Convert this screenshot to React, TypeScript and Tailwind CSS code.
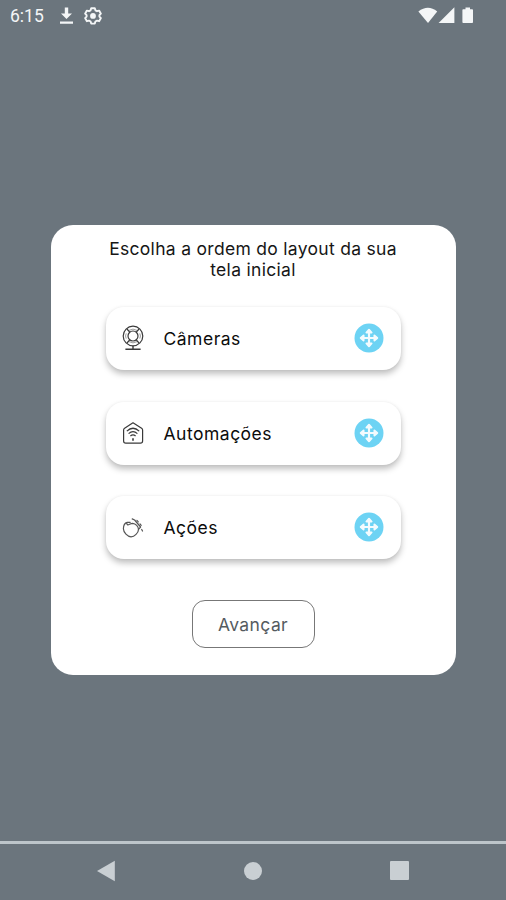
import React from 'react';

const CameraIcon = () => (
  <svg width="24" height="28" viewBox="0 0 24 28" fill="none" stroke="#3a3a3a" strokeWidth="1.2">
    <circle cx="12" cy="11" r="9.8" />
    <circle cx="12" cy="11" r="5" />
    <path d="M8.7 7.2 6 4M15.3 7.2 18 4M8.7 14.8 6 18M15.3 14.8 18 18" />
    <path d="M7.2 5.6Q12 2.6 16.8 5.6M7.2 16.4Q12 19.4 16.8 16.4M5.2 8.4Q3.9 11 5.2 13.6M18.8 8.4Q20.100 11 18.800 13.600" strokeWidth="0.5" />
    <path d="M12 20.8v3M4.4 24.2h15.2" strokeWidth="1.4" />
  </svg>
);

const HouseWifiIcon = () => (
  <svg width="24" height="28" viewBox="0 0 24 28" fill="none" stroke="#3a3a3a" strokeWidth="1.2" strokeLinejoin="round">
    <path d="M12 3.8 20.6 9.2Q21.6 9.9 21.6 11V22Q21.6 24.2 19.4 24.2H4.8Q2.6 24.2 2.6 22V11Q2.6 9.9 3.6 9.2Z" />
    <path d="M5.8 12.1Q12 6.4 18.2 12.1M7.6 14.6Q12 10.6 16.4 14.6M9.4 17Q12 14.8 14.6 17" />
    <path d="M12 19.2v2.6" strokeWidth="1.6" />
  </svg>
);

const ClapIcon = () => (
  <svg width="24" height="28" viewBox="0 0 24 28" fill="none" stroke="#555" strokeWidth="1.2" strokeLinecap="round" strokeLinejoin="round">
    <path d="M6.2 8.3C3.600 9 2.400 11.600 2.400 14.800 2.500 18.500 6.500 22.700 10 22.800 13.500 22.700 17.400 19 17.500 15.400 17.500 12.400 14.700 9.500 11.600 9.300 9.700 9.300 8.400 10.500 6.800 10.900 5.700 10.300 5.500 9 6.200 8.300ZM6.200 8.300 9.200 8.300" />
    <path d="M11.200 4.900 13.600 6 19.600 13 17.500 15.400" />
    <path d="M15.900 6.400l1.400 1.400M19 9.900l1.200 1.400M20.700 15.500l.8 1.500" />
  </svg>
);

const MoveHandle = () => (
  <svg className="mb-px" width="30" height="30" viewBox="0 0 30 30">
    <circle cx="15" cy="15" r="14.5" fill="#6dd3f4" />
    <g fill="#fff" stroke="#fff" strokeLinejoin="round" opacity="0.92">
      <path d="M15 8.5v13M8.5 15h13" strokeWidth="2.2" />
      <path
        d="M15 6.7 17.6 9.6H12.4ZM15 23.3 17.6 20.4H12.4ZM6.7 15 9.6 12.4V17.6ZM23.3 15 20.4 12.4V17.6Z"
        strokeWidth="1.9"
      />
    </g>
  </svg>
);

const sections = [
  { label: 'Câmeras', Icon: CameraIcon },
  { label: 'Automações', Icon: HouseWifiIcon },
  { label: 'Ações', Icon: ClapIcon },
];

const StatusBar = () => (
  <header className="flex h-8 items-center justify-between pl-2.5 pr-8 text-[#f4f6f7]">
    <div className="flex items-center">
      <span className="w-[49px] font-[Roboto] text-[17.5px] leading-8">6:15</span>
      <svg className="mr-2" width="16" height="20" viewBox="0 0 16 20" fill="currentColor">
        <path d="M5.8 1.5h3.4v6H13L7.5 13.1 2 7.5h3.8ZM1 15.5h13v2.2H1Z" />
      </svg>
      <svg width="20" height="20" viewBox="0 0 20 20" fill="none" stroke="currentColor">
        <path
          d="M8.2 2.2h3.6l.6 2.1 1.6.9 2.1-.6 1.8 3.1-1.5 1.5v1.4l1.5 1.5-1.8 3.1-2.1-.6-1.6.9-.6 2.1H8.2l-.6-2.1-1.6-.9-2.1.6-1.8-3.1 1.5-1.5V9.2L2.100 7.700l1.800-3.100 2.100.6 1.600-.9Z"
          strokeWidth="1.9"
          strokeLinejoin="round"
        />
        <circle cx="10" cy="9.9" r="2.9" fill="currentColor" stroke="none" />
      </svg>
    </div>
    <svg width="58" height="20" viewBox="0 0 58 20" fill="currentColor">
      <path d="M2.4 5.5Q12 -2 21.2 5.5L12 17Z" />
      <path d="M38.4 1.2V17H22.600Z" />
      <path d="M47.2 3.3h2.3V1.5H54v1.8h2.2q.8 0 .8.8v12q0 .9-.8.9h-9q-.8 0-.8-.9v-12q0-.8.8-.8Z" />
    </svg>
  </header>
);

const NavBar = () => (
  <nav className="flex h-[59px] items-center justify-between border-t-[3px] border-[#bdc5ca] pb-[3px] pl-24 pr-[97px]">
    <svg width="20" height="22" viewBox="0 0 20 22" fill="#c9cfd3">
      <path d="M1 11 18.8.8v20.4Z" />
    </svg>
    <div className="size-[18px] rounded-full bg-[#c9cfd3]" />
    <div className="size-[19px] rounded-[1px] bg-[#c9cfd3]" />
  </nav>
);

const App = () => {
  return (
    <div className="flex h-[900px] w-[506px] flex-col overflow-hidden bg-[#6b757d] font-[Inter,sans-serif]">
      <StatusBar />

      <main className="flex flex-1 flex-col items-center pt-[193px]">
        <div className="flex h-[450px] w-[405px] flex-col items-center rounded-[22px] bg-white pt-[13px]">
          <h1 className="w-[300px] text-center text-[17.5px] leading-[21px] tracking-[0.3px] text-[#161616]">
            Escolha a ordem do layout da sua tela inicial
          </h1>

          <ul className="mt-[27px] flex flex-col gap-[31.5px]">
            {sections.map(({ label, Icon }) => (
              <li
                key={label}
                className="flex h-[63px] w-[295px] items-center rounded-[18px] bg-white pl-[15px] pr-[17px] shadow-[0_4px_6px_rgba(0,0,0,0.25),0_0_3px_rgba(0,0,0,0.05)]"
              >
                <Icon />
                <span className="ml-[19px] flex-1 pt-0.5 text-[17.5px] tracking-[0.5px] text-[#0c0c0c]">{label}</span>
                <MoveHandle />
              </li>
            ))}
          </ul>

          <button className="mt-[41px] h-12 w-[123px] rounded-[13px] border border-[#777] pt-0.5 text-[17.5px] tracking-[0.4px] text-[#555b5f]">
            Avançar
          </button>
        </div>
      </main>

      <NavBar />
    </div>
  );
};

export default App;
